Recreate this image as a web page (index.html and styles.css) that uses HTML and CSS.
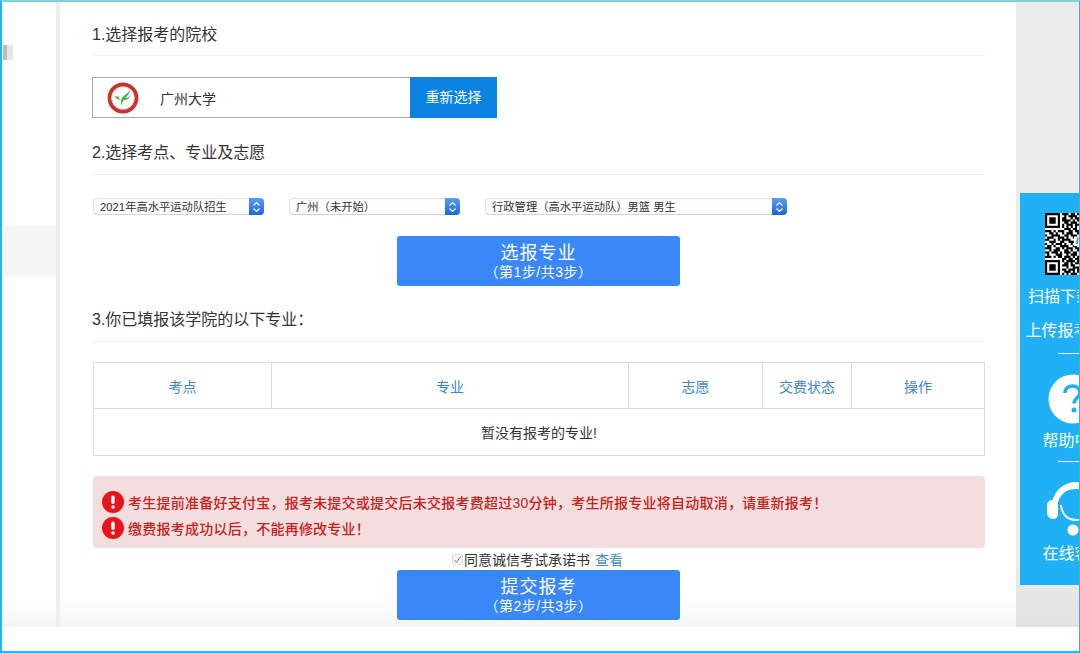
FILE: index.html
```html
<!DOCTYPE html>
<html lang="zh-CN">

<head>
  <meta charset="UTF-8">
  <title>选择报考的院校</title>
  <link rel="stylesheet" href="styles.css">
</head>

<body>
  <div class="frame">
    <div class="page">
      <div class="rail">
        <div class="rail-tab"></div>
        <div class="rail-item"></div>
      </div>

      <div class="main">
        <h3 class="step-title">1.选择报考的院校</h3>
        <div class="school">
          <div class="school-info">
            <svg class="school-logo" width="32" height="32" viewBox="0 0 32 32">
              <circle cx="16" cy="16" r="13.500" fill="#fff" stroke="#c8332b" stroke-width="3.800" />
              <circle cx="16" cy="16" r="11.200" fill="none" stroke="#e9b9a8" stroke-width=".6" />
              <path d="M15 24c-1.500-3-1.500-5.500 0-8 1.500-2.500 5-3.500 8-8-.5 3.500-2.500 6-5 8 2.500 0 4.500-1 6-3-1.500 3.500-4.500 5-7.500 5.500-1.500 1.500-1.500 3.500-1.500 5.500zM14 18c-2.500 0-5-1.500-7-4 2 .8 4 .8 5 0-1 1.500 0 3 2 4z" fill="#4fae57" />
            </svg>
            <span>广州大学</span>
          </div>
          <div class="school-btn">重新选择</div>
        </div>

        <h3 class="step-title title-two">2.选择考点、专业及志愿</h3>
        <div class="selects">
          <div class="select select-sm">
            <span>2021年高水平运动队招生</span>
            <i class="select-arrow"><svg width="9" height="12" viewBox="0 0 9 12"><path d="M1.500 4.500 4.500 1.500l3 3M1.500 7.500l3 3 3-3" fill="none" stroke="#fff" stroke-width="1.200" /></svg></i>
          </div>
          <div class="select select-sm">
            <span>广州（未开始）</span>
            <i class="select-arrow"><svg width="9" height="12" viewBox="0 0 9 12"><path d="M1.500 4.500 4.500 1.500l3 3M1.500 7.500l3 3 3-3" fill="none" stroke="#fff" stroke-width="1.200" /></svg></i>
          </div>
          <div class="select select-lg">
            <span>行政管理（高水平运动队）男篮 男生</span>
            <i class="select-arrow"><svg width="9" height="12" viewBox="0 0 9 12"><path d="M1.500 4.500 4.500 1.500l3 3M1.500 7.500l3 3 3-3" fill="none" stroke="#fff" stroke-width="1.200" /></svg></i>
          </div>
        </div>
        <div class="big-btn btn-first">
          <b>选报专业</b>
          <small>（第1步/共3步）</small>
        </div>

        <h3 class="step-title step-three">3.你已填报该学院的以下专业：</h3>
        <table class="majors">
          <colgroup>
            <col class="col-a">
            <col class="col-b">
            <col class="col-c">
            <col class="col-d">
            <col>
          </colgroup>
          <tr>
            <th>考点</th>
            <th>专业</th>
            <th>志愿</th>
            <th>交费状态</th>
            <th>操作</th>
          </tr>
          <tr>
            <td colspan="5">暂没有报考的专业!</td>
          </tr>
        </table>

        <div class="alert">
          <p>
            <svg width="22" height="22" viewBox="0 0 22 22"><circle cx="11" cy="11" r="11" fill="#e8141c" /><rect x="9.300" y="4.500" width="3.400" height="8.500" rx="1.700" fill="#fff" /><circle cx="11" cy="16" r="1.800" fill="#fff" /></svg>
            考生提前准备好支付宝，报考未提交或提交后未交报考费超过30分钟，考生所报专业将自动取消，请重新报考！
          </p>
          <p>
            <svg width="22" height="22" viewBox="0 0 22 22"><circle cx="11" cy="11" r="11" fill="#e8141c" /><rect x="9.300" y="4.500" width="3.400" height="8.500" rx="1.700" fill="#fff" /><circle cx="11" cy="16" r="1.800" fill="#fff" /></svg>
            缴费报考成功以后，不能再修改专业！
          </p>
        </div>

        <div class="agree">
          <i class="agree-check"><svg width="9" height="9" viewBox="0 0 9 9"><path d="M1.500 5 3.500 7.500 7.500 1.500" fill="none" stroke="#888" stroke-width="1" /></svg></i>
          <span>同意诚信考试承诺书</span>
          <a href="#">查看</a>
        </div>
        <div class="big-btn">
          <b>提交报考</b>
          <small>（第2步/共3步）</small>
        </div>
      </div>

      <div class="gutter"></div>
    </div>
    <div class="foot"></div>

    <!-- floating panel, cut off by the window edge -->
    <div class="float-panel">
      <div class="float-inner">
        <svg class="qr" width="62" height="62" viewBox="0 0 29 29">
          <rect width="29" height="29" fill="#fff" />
          <path d="M0 0h7v7h-7zM1 1v5h5v-5zM2 2h3v3h-3zM0 22h7v7h-7zM1 23v5h5v-5zM2 24h3v3h-3z" fill-rule="evenodd" />
          <path stroke="#000" stroke-width="1" fill="none" d="M8 .5h3M12 .5h2M15 .5h3M9 1.500h1M11 1.500h4M16 1.500h2M8 2.500h2M12 2.500h1M14 2.500h3M8 3.500h4M13 3.500h1M15 3.500h3M9 4.500h2M12 4.500h3M16 4.500h1M8 5.500h1M10 5.500h3M14 5.500h4M8 6.500h1M10 6.500h1M12 6.500h1M14 6.500h1M16 6.500h1M9 7.500h3M13 7.500h2M0 8.500h3M4 8.500h1M6 8.500h3M11 8.500h2M14 8.500h3M2 9.500h2M5 9.500h1M8 9.500h1M10 9.500h3M15 9.500h3M0 10.500h1M3 10.500h4M9 10.500h2M12 10.500h3M1 11.500h3M6 11.500h3M10 11.500h1M13 11.500h2M16 11.500h2M0 12.500h2M4 12.500h1M6 12.500h1M8 12.500h4M14 12.500h1M2 13.500h3M7 13.500h2M11 13.500h3M0 14.500h1M3 14.500h1M5 14.500h3M9 14.500h1M12 14.500h1M1 15.500h2M4 15.500h1M7 15.500h4M13 15.500h2M0 16.500h3M5 16.500h2M8 16.500h1M10 16.500h3M14 16.500h3M2 17.500h1M4 17.500h3M9 17.500h2M12 17.500h1M15 17.500h3M0 18.500h2M3 18.500h3M7 18.500h1M9 18.500h3M13 18.500h2M1 19.500h1M5 19.500h3M10 19.500h1M12 19.500h3M16 19.500h2M0 20.500h3M4 20.500h1M6 20.500h2M9 20.500h3M13 20.500h1M15 20.500h3M8 21.500h2M11 21.500h2M14 21.500h2M8 22.500h1M10 22.500h4M15 22.500h3M9 23.500h2M12 23.500h1M14 23.500h2M8 24.500h3M12 24.500h2M16 24.500h2M10 25.500h1M13 25.500h3M8 26.500h2M11 26.500h3M15 26.500h1M9 27.500h3M13 27.500h1M15 27.500h3M8 28.500h1M10 28.500h1M12 28.500h3M16 28.500h1" />
          <rect x="13.500" y="11" width="4" height="4.500" fill="#fff" />
          <path d="M14.300 14.500l.8-3h.8l-.6 3zM16 14.500l.4-1.800h1v1.800z" fill="#3f9fe0" />
        </svg>
        <p class="float-text float-first">扫描下载APP</p>
        <p class="float-text float-second">上传报考材料</p>
        <div class="float-line"></div>
        <svg class="float-icon icon-help" width="50" height="50" viewBox="0 0 50 50">
          <circle cx="25" cy="25" r="24.500" fill="#fff" />
          <path d="M17 19c0-5 4-7 7.500-7 4.500 0 7.500 3 7.500 6.500 0 5-6 5.500-6 11" fill="none" stroke="#22aef4" stroke-width="3.600" />
          <circle cx="26" cy="36" r="2.500" fill="#22aef4" />
        </svg>
        <p class="float-text float-label">帮助中心</p>
        <div class="float-line line-second"></div>
        <svg class="float-icon icon-chat" width="60" height="56" viewBox="0 0 60 56">
          <path d="M6 21C9 8 19 1 30 1s21 7 24 20l-6 0C45 12 39 8 30 8s-15 4-18 13z" fill="#fff" />
          <path d="M1 24c0-3 3-5 6-5h5v14c0 3-2 5-5 5-3 0-6-3-6-6zM59 24c0-3-3-5-6-5h-5v14c0 3 2 5 5 5 3 0 6-3 6-6z" fill="#fff" />
          <path d="M15 24c1 10 7 15 15 15s14-5 15-15" fill="none" stroke="#fff" stroke-width="2" />
          <circle cx="27" cy="49" r="5.500" fill="#fff" />
        </svg>
        <p class="float-text float-label">在线客服</p>
      </div>
    </div>
  </div>
</body>

</html>
```

FILE: styles.css
```css
* {
  box-sizing: border-box;
}

body {
  margin: 0;
  background: #fff;
  font-family: "Liberation Sans", "Noto Sans CJK SC", sans-serif;
  color: #333;
}

.frame {
  position: relative;
  width: 1080px;
  height: 653px;
  overflow: hidden;
  display: flex;
  flex-direction: column;
  border: 2px solid #2bb8dc;
  border-top-color: #7fd4de;
  border-left-color: #1cb8ee;
  border-right-width: 1px;
}

.page {
  flex: 1;
  display: flex;
  min-height: 0;
}

.foot {
  height: 24px;
  background: #fff;
}

/* left column */
.rail {
  position: relative;
  width: 54px;
  padding: 224px 0 0 3px;
  background: linear-gradient(to bottom, #fff 95%, #f6f6f6 100%);
}

.rail-item {
  height: 51px;
  background: #f5f5f5;
}

.rail-tab {
  position: absolute;
  top: 43px;
  left: 1px;
  width: 10px;
  height: 15px;
  background: linear-gradient(to right, #bbb 0, #bbb 40%, #e6e6e6 40%, #e6e6e6 100%);
}

/* main column */
.main {
  width: 960px;
  padding: 22px 31px 0 32px;
  border-left: 4px solid #eee;
  background: linear-gradient(to bottom, #fff 95%, #f5f5f6 100%);
}

.step-title {
  margin: 23px 0 0;
  padding-bottom: 10px;
  border-bottom: 1px solid #eee;
  font-size: 16px;
  font-weight: 400;
  line-height: 22px;
  color: #333;
}

.main > .step-title:first-child {
  margin-top: 0;
  padding-bottom: 9px;
}

.title-two {
  margin-top: 24px;
}

.step-three {
  margin-top: 23px;
}

.school {
  display: flex;
  width: 405px;
  height: 41px;
  margin-top: 21px;
  border: 1px solid #aaa;
}

.school-info {
  flex: 1;
  display: flex;
  align-items: center;
  padding-left: 14px;
  font-size: 14px;
}

.school-logo {
  margin-right: 21px;
}

.school-btn {
  width: 87px;
  margin: -1px -1px -1px 0;
  background: #0a84e0;
  color: #fff;
  font-size: 14px;
  line-height: 41px;
  text-align: center;
}

.selects {
  display: flex;
  gap: 25px;
  margin-top: 23px;
  padding-left: 1px;
}

.select {
  display: flex;
  align-items: center;
  justify-content: space-between;
  height: 17px;
  padding-left: 6px;
  border: 1px solid #e4e4e4;
  border-bottom-color: #d4d4d4;
  border-radius: 4px;
  background: #fdfdfd;
  font-size: 11.300px;
  color: #333;
}

.select span {
  padding-bottom: 2px;
}

.select-sm {
  width: 171px;
}

.select-lg {
  width: 302px;
}

.select-arrow {
  display: flex;
  align-items: center;
  justify-content: center;
  width: 15px;
  height: 17px;
  margin: 0 -1px 0 0;
  border-radius: 0 4px 4px 0;
  background: linear-gradient(to bottom, #5b9df2, #1c66dc);
}

.big-btn {
  display: flex;
  flex-direction: column;
  align-items: center;
  width: 283px;
  height: 50px;
  margin: 0 auto;
  padding-top: 6px;
  border-radius: 3px;
  background: #3a87f7;
  color: #fff;
}

.btn-first {
  margin-top: 21px;
}

.big-btn b {
  font-size: 18px;
  font-weight: 400;
  line-height: 22px;
  letter-spacing: 1px;
}

.big-btn small {
  font-size: 14px;
  line-height: 16px;
  letter-spacing: .5px;
}

.majors {
  width: 892px;
  height: 94px;
  margin: 20px 0 0 1px;
  border-collapse: collapse;
  table-layout: fixed;
  font-size: 14px;
}

.col-a {
  width: 178px;
}

.col-b {
  width: 357px;
}

.col-c {
  width: 134px;
}

.col-d {
  width: 89px;
}

.majors th,
.majors td {
  border: 1px solid #ddd;
  text-align: center;
  font-weight: 400;
}

.majors th {
  height: 46px;
  color: #3c86cc;
}

.alert {
  height: 72px;
  margin: 20px 0 0 1px;
  padding-top: 13px;
  border-radius: 4px;
  background: #f2dede;
  color: #c8201c;
  font-size: 14px;
  font-weight: 500;
}

.alert p {
  display: flex;
  align-items: center;
  gap: 4px;
  height: 26px;
  margin: 0;
  padding-left: 9px;
  letter-spacing: .24px;
}

.agree {
  display: flex;
  align-items: center;
  justify-content: center;
  height: 22px;
  padding-right: 2px;
  font-size: 14px;
}

.agree-check {
  display: flex;
  align-items: center;
  justify-content: center;
  width: 11px;
  height: 11px;
  margin-right: 1px;
  border: 1px solid #ddd;
  border-radius: 2px;
  background: #f4f4f4;
}

.agree a {
  margin-left: 5px;
  color: #4a90c8;
  text-decoration: none;
}

.gutter {
  flex: 1;
  background: linear-gradient(to bottom, #ebebec 90%, #e2e2e2 100%);
}

/* floating panel */
.float-panel {
  position: absolute;
  top: 191px;
  left: 1018px;
  width: 59px;
  height: 392px;
  overflow: hidden;
  background: #1fb0f5;
}

.float-inner {
  display: flex;
  flex-direction: column;
  align-items: center;
  width: 112px;
  padding-top: 20px;
  color: #fff;
}

.qr {
  flex: none;
}

.float-text {
  margin: 0;
  font-size: 16px;
  line-height: 34px;
  white-space: nowrap;
}

.float-first {
  margin-top: 5px;
}

.float-second {
  margin-right: 5px;
}

.float-line {
  width: 36px;
  height: 1px;
  margin-top: 5px;
  background: #fff;
}

.line-second {
  margin-top: 8px;
}

.float-icon {
  flex: none;
}

.icon-help {
  margin: 20px 6px 0 0;
}

.icon-chat {
  margin-top: 19px;
}

.float-label {
  margin: 5px 3px 0 0;
  line-height: 24px;
}
```
